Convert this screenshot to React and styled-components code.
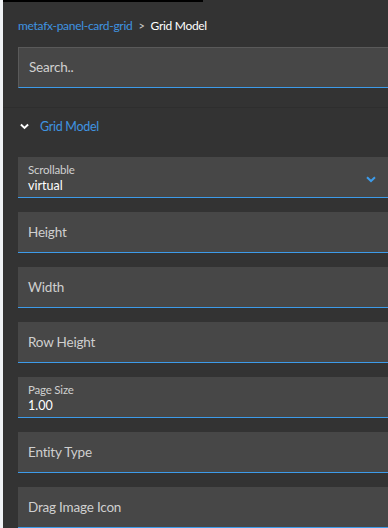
import React from "react";
import styled, { createGlobalStyle } from "styled-components";

const GlobalStyle = createGlobalStyle`
  html, body {
    margin: 0;
    padding: 0;
    background: #f0f2f5;
    overflow: hidden;
  }
  body {
    font-family: "Lato", "Open Sans", sans-serif;
  }
`;

const Page = styled.div`
  display: flex;
  width: 388px;
  height: 528px;
`;

const Panel = styled.div`
  margin-left: 3px;
  flex: 1;
  background: #333333;
  display: flex;
  flex-direction: column;
  overflow: hidden;
`;

const TopBar = styled.div`
  width: 200px;
  height: 3px;
  background: #000;
`;

const Header = styled.div`
  padding: 14px 0 19px 15px;
`;

const Breadcrumb = styled.div`
  display: flex;
  align-items: center;
  gap: 6px;
  height: 20px;
  font-size: 12px;
  letter-spacing: -0.3px;
  margin-bottom: 11px;
`;

const Crumb = styled.span`
  color: ${({ active }) => (active ? "#ffffff" : "#3f93e0")};
`;

const Sep = styled.span`
  color: #cfcfcf;
  font-size: 11px;
`;

const SearchBox = styled.div`
  height: 39px;
  margin-right: -20px;
  background: #474747;
  border: 1px solid #5a5a5a;
  border-bottom: 1px solid #3d9be9;
  display: flex;
  align-items: center;
  padding-left: 10px;
  color: #d0d0d0;
  font-size: 13.5px;
  letter-spacing: -0.2px;
`;

const Divider = styled.div`
  height: 1px;
  background: #575757;
  border-bottom: 1px solid #2e2e2e;
`;

const Section = styled.div`
  padding: 9px 0 0 15px;
`;

const SectionTitle = styled.div`
  display: flex;
  align-items: center;
  gap: 11px;
  height: 18px;
  padding-left: 2px;
  color: #3f93e0;
  font-size: 12.5px;
  letter-spacing: -0.3px;
  margin-bottom: 22px;
`;

const Fields = styled.div`
  display: flex;
  flex-direction: column;
  gap: 14px;
  margin-right: -20px;
`;

const Field = styled.div`
  position: relative;
  height: 40px;
  background: #474747;
  border-bottom: 1px solid #3d9be9;
  display: flex;
  flex-direction: column;
  justify-content: ${({ filled }) => (filled ? "flex-start" : "center")};
  padding-left: 10px;
`;

const Placeholder = styled.span`
  color: #cfcfcf;
  font-size: 13.5px;
  letter-spacing: -0.2px;
`;

const Label = styled.span`
  color: #cfcfcf;
  font-size: 11.5px;
  letter-spacing: -0.2px;
  line-height: 14px;
  margin-top: 6px;
`;

const Value = styled.span`
  color: #ffffff;
  font-size: 12.5px;
  line-height: 16px;
  margin-top: 1px;
`;

const Caret = styled.svg`
  position: absolute;
  right: 32px;
  top: 19px;
`;

const Chevron = ({ color }) => (
  <svg width="9" height="7" viewBox="0 0 10 7">
    <path d="M1 1.2 L5 5 L9 1.2" fill="none" stroke={color} strokeWidth="2.2" />
  </svg>
);

const plain = ["Height", "Width", "Row Height"];
const tail = ["Entity Type", "Drag Image Icon"];

export default function App() {
  return (
    <>
      <GlobalStyle />
      <Page>
        <Panel>
          <TopBar />
          <Header>
            <Breadcrumb>
              <Crumb>metafx-panel-card-grid</Crumb>
              <Sep>&gt;</Sep>
              <Crumb active>Grid Model</Crumb>
            </Breadcrumb>
            <SearchBox>Search..</SearchBox>
          </Header>
          <Divider />
          <Section>
            <SectionTitle>
              <Chevron color="#ffffff" />
              Grid Model
            </SectionTitle>
            <Fields>
              <Field filled>
                <Label>Scrollable</Label>
                <Value>virtual</Value>
                <Caret width="10" height="7" viewBox="0 0 10 7">
                  <path d="M1 1.2 L5 5 L9 1.2" fill="none" stroke="#3d9be9" strokeWidth="2" />
                </Caret>
              </Field>
              {plain.map((p) => (
                <Field key={p}>
                  <Placeholder>{p}</Placeholder>
                </Field>
              ))}
              <Field filled>
                <Label>Page Size</Label>
                <Value>1.00</Value>
              </Field>
              {tail.map((p) => (
                <Field key={p}>
                  <Placeholder>{p}</Placeholder>
                </Field>
              ))}
            </Fields>
          </Section>
        </Panel>
      </Page>
    </>
  );
}
